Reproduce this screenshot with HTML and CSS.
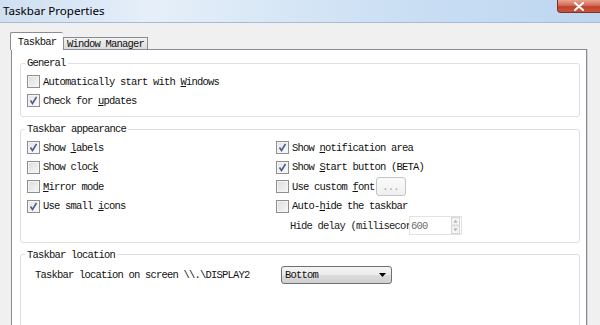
FILE: index.html
```html
<!DOCTYPE html>
<html>
<head>
<meta charset="utf-8">
<link rel="stylesheet" href="styles.css">
</head>
<body>
<div class="window">
  <div class="titlebar">
    <span class="title">Taskbar Properties</span>
    <span class="close"><svg width="12" height="9" viewBox="0 0 12 9"><path d="M2 1 L10 8 M10 1 L2 8" stroke="#fff" stroke-width="2.2" stroke-linecap="round"/></svg></span>
  </div>
  <div class="client">
    <div class="tabs">
      <div class="tab active">Taskbar</div>
      <div class="tab">Window Manager</div>
    </div>
    <div class="panel">
      <fieldset class="group general">
        <legend>General</legend>
        <div class="rows">
          <label class="check"><span class="box"></span><span>Automatically start with <u>W</u>indows</span></label>
          <label class="check"><span class="box on"><svg width="11" height="11" viewBox="0 0 11 11"><path d="M2.5 5.5 L4.5 8.5 L8.5 2" fill="none" stroke="#4a5e94" stroke-width="1.6"/></svg></span><span>Check for <u>u</u>pdates</span></label>
        </div>
      </fieldset>
      <fieldset class="group appearance">
        <legend>Taskbar appearance</legend>
        <div class="grid">
          <label class="check"><span class="box on"><svg width="11" height="11" viewBox="0 0 11 11"><path d="M2.5 5.5 L4.5 8.5 L8.5 2" fill="none" stroke="#4a5e94" stroke-width="1.6"/></svg></span><span>Show <u>l</u>abels</span></label>
          <label class="check"><span class="box on"><svg width="11" height="11" viewBox="0 0 11 11"><path d="M2.5 5.5 L4.5 8.5 L8.5 2" fill="none" stroke="#4a5e94" stroke-width="1.6"/></svg></span><span>Show <u>n</u>otification area</span></label>
          <label class="check"><span class="box"></span><span>Show cloc<u>k</u></span></label>
          <label class="check"><span class="box on"><svg width="11" height="11" viewBox="0 0 11 11"><path d="M2.5 5.5 L4.5 8.5 L8.5 2" fill="none" stroke="#4a5e94" stroke-width="1.6"/></svg></span><span>Show <u>S</u>tart button (BETA)</span></label>
          <label class="check"><span class="box"></span><span><u>M</u>irror mode</span></label>
          <label class="check"><span class="box"></span><span>Use custom <u>f</u>ont</span><span class="fontbtn">...</span></label>
          <label class="check"><span class="box on"><svg width="11" height="11" viewBox="0 0 11 11"><path d="M2.5 5.5 L4.5 8.5 L8.5 2" fill="none" stroke="#4a5e94" stroke-width="1.6"/></svg></span><span>Use small <u>i</u>cons</span></label>
          <label class="check"><span class="box"></span><span>Auto-<u>h</u>ide the taskbar</span></label>
          <div class="empty"></div>
          <div class="delay">
            <span class="delaylabel">Hide delay (millisecor</span>
            <span class="spin"><span class="spinval">600</span><span class="spinbtns"><svg width="9" height="17" viewBox="0 0 9 17"><rect x="0.5" y="0.5" width="8" height="7.5" fill="#f4f4f4" stroke="#d6d6d6"/><rect x="0.5" y="9" width="8" height="7.5" fill="#f4f4f4" stroke="#d6d6d6"/><path d="M2.5 5.5 L4.5 3 L6.5 5.5 Z" fill="#a8a8a8"/><path d="M2.5 11.5 L4.5 14 L6.5 11.5 Z" fill="#a8a8a8"/></svg></span></span>
          </div>
        </div>
      </fieldset>
      <fieldset class="group location">
        <legend>Taskbar location</legend>
        <div class="locrow">
          <span class="loclabel">Taskbar location on screen \\.\DISPLAY2</span>
          <span class="combo"><span>Bottom</span><svg width="7" height="4" viewBox="0 0 7 4"><path d="M0 0 L7 0 L3.5 4 Z" fill="#000"/></svg></span>
        </div>
      </fieldset>
    </div>
  </div>
</div>
</body>
</html>
```
FILE: styles.css
```css
* { box-sizing: border-box; }
html, body { margin: 0; padding: 0; }
body {
  width: 600px;
  height: 325px;
  overflow: hidden;
  background: #f0f0f0;
  font-family: "Liberation Mono", monospace;
  font-size: 10.5px;
  letter-spacing: -0.8px;
  color: #111;
}
.window { width: 600px; height: 325px; }
.titlebar {
  height: 23px;
  display: flex;
  align-items: flex-start;
  border-bottom: 1px solid #a7bbd1;
  background: linear-gradient(90deg, #d0e0f2 0%, #dbe8f6 15%, #e6eff9 25%, #d8e7f6 45%, #c9def3 70%, #bdd6f0 100%);
}
.title {
  font-family: "Noto Sans", sans-serif;
  font-size: 11.6px;
  letter-spacing: 0;
  padding: 3px 0 0 3px;
  color: #000;
}
.close {
  margin-left: auto;
  width: 43px;
  height: 13px;
  display: flex;
  align-items: center;
  justify-content: center;
  border: 1px solid #7d3225;
  border-top: none;
  border-right: none;
  border-radius: 0 0 0 4px;
  background: linear-gradient(#e9a493 0%, #d36b56 45%, #c0432d 55%, #c6553c 100%);
}
.client { padding: 9px 0 0 10px; }
.tabs { display: flex; align-items: flex-end; height: 17px; }
.tab {
  height: 12px;
  width: 85px;
  border: 1px solid #898c95;
  border-bottom: none;
  background: linear-gradient(#f2f2f2, #dcdcdc);
  display: flex;
  align-items: center;
  justify-content: center;
  line-height: 10px;
}
.tab.active {
  height: 18px;
  width: 53px;
  margin-bottom: -1px;
  background: #fff;
  position: relative;
  z-index: 1;
  border-right: none;
  border-radius: 2px 2px 0 0;
}
.panel {
  margin-left: 1px;
  width: 576px;
  height: 290px;
  background: #fff;
  border: 1px solid #898c95;
  box-shadow: 1px 0 0 #d4d4d4;
  padding: 7px 6px 0 8px;
}
.group {
  margin: 0 0 6px 0;
  padding: 0 6px 0 6px;
  border: 1px solid #dcdfe3;
  border-radius: 3px;
  min-width: 0;
}
legend {
  padding: 0 2px;
  margin-left: -2px;
  line-height: 12px;
  height: 12px;
}
.rows { padding: 3px 0 6px 0; }
.check {
  display: flex;
  align-items: center;
  height: 19px;
  white-space: nowrap;
}
.box {
  width: 13px;
  height: 13px;
  flex: none;
  border: 1px solid #8f8f8f;
  background: linear-gradient(135deg, #dcdcdc, #f7f7f7);
  box-shadow: inset 0 0 0 1px #f4f4f4;
  margin-right: 3px;
  display: flex;
  align-items: center;
  justify-content: center;
}
.box.on { background: linear-gradient(135deg, #e4e4e4, #fbfbfb); }
.grid {
  display: grid;
  grid-template-columns: 249px 1fr;
  grid-auto-rows: 19.5px;
  padding: 3px 0 6px 0;
}
.grid .check { height: 19.5px; }
.fontbtn {
  margin-left: 1px;
  width: 30px;
  height: 19px;
  border: 1px solid #c4c4c4;
  border-radius: 3px;
  background: linear-gradient(#fbfbfb, #efefef);
  color: #a0a0a0;
  display: flex;
  align-items: center;
  justify-content: center;
}
.delay {
  display: flex;
  align-items: center;
  padding-left: 14px;
}
.delaylabel {
  width: 119px;
  white-space: nowrap;
  color: #222;
}
.spin {
  width: 53px;
  height: 19px;
  border: 1px solid #e2e2e2;
  background: #fff;
  display: flex;
  align-items: center;
  justify-content: space-between;
  padding: 0 1px 0 1px;
  color: #6d6d6d;
}
.spinbtns { display: flex; }
.location { min-height: 80px; }
.locrow {
  display: flex;
  align-items: center;
  height: 19px;
  margin-top: 5px;
  padding-left: 8px;
}
.loclabel { width: 246px; white-space: nowrap; }
.combo {
  width: 111px;
  height: 18px;
  border: 1px solid #707070;
  border-radius: 3px;
  background: linear-gradient(#f4f4f4 0%, #ebebeb 50%, #dddddd 51%, #cfcfcf 100%);
  display: flex;
  align-items: center;
  justify-content: space-between;
  padding: 0 5px 0 3px;
}
```
